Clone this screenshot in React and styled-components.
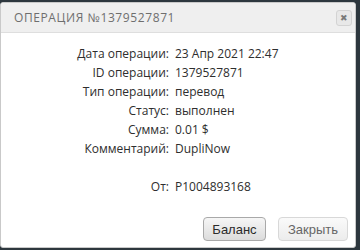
import React from "react";
import styled, { createGlobalStyle } from "styled-components";

const GlobalStyle = createGlobalStyle`
  body {
    margin: 0;
    background: #2d373e;
    font-family: "Open Sans", "Liberation Sans", sans-serif;
  }
`;

const Dialog = styled.div`
  width: 356px;
  height: 246px;
  margin-top: 2px;
  background: #fff;
  border: 1px solid #c9c9c9;
  border-radius: 3px;
  display: flex;
  flex-direction: column;
  box-sizing: border-box;
  overflow: hidden;
`;

const Header = styled.div`
  height: 29px;
  flex: 0 0 29px;
  background: #efefef;
  border-bottom: 1px solid #dedede;
  display: flex;
  align-items: center;
  justify-content: space-between;
  padding: 0 3px 0 13px;
`;

const Title = styled.span`
  font-size: 12px;
  letter-spacing: 0.6px;
  color: #6e6e6e;
  text-transform: uppercase;
`;

const CloseBtn = styled.button`
  width: 16px;
  height: 16px;
  padding: 0;
  border: 1px solid #d3d3d3;
  border-radius: 3px;
  background: #e8e8e8;
  color: #7a7a7a;
  font-size: 9px;
  line-height: 14px;
  display: flex;
  align-items: center;
  justify-content: center;
  cursor: pointer;
`;

const Details = styled.div`
  flex: 1;
  display: grid;
  grid-template-columns: 168px 1fr;
  grid-template-rows: repeat(8, 19px);
  column-gap: 6px;
  align-items: center;
  align-content: start;
  padding-top: 11px;
  font-size: 12px;
  line-height: 19px;
  color: #2e2e2e;
`;

const Label = styled.span`
  text-align: right;
  grid-row: ${(p) => p.$row};
`;

const Value = styled.span`
  grid-row: ${(p) => p.$row};
`;

const Footer = styled.div`
  display: flex;
  justify-content: flex-end;
  gap: 12px;
  padding: 0 7px 6px 0;
`;

const Button = styled.button`
  height: 24px;
  width: ${(p) => (p.$primary ? "63px" : "70px")};
  padding: 0;
  border-radius: 4px;
  font-family: "Liberation Sans", Arial, sans-serif;
  font-size: 13px;
  cursor: pointer;
  border: 1px solid ${(p) => (p.$primary ? "#a9a9a9" : "#d8d8d8")};
  color: ${(p) => (p.$primary ? "#2b2b2b" : "#666")};
  background: ${(p) =>
    p.$primary
      ? "linear-gradient(#f6f6f6, #dcdcdc)"
      : "linear-gradient(#fafafa, #ececec)"};
`;

const rows = [
  ["Дата операции:", "23 Апр 2021 22:47", 1],
  ["ID операции:", "1379527871", 2],
  ["Тип операции:", "перевод", 3],
  ["Статус:", "выполнен", 4],
  ["Сумма:", "0.01 $", 5],
  ["Комментарий:", "DupliNow", 6],
  ["От:", "P1004893168", 8],
];

const App = () => {
  return (
    <>
      <GlobalStyle />
      <Dialog>
        <Header>
          <Title>Операция №1379527871</Title>
          <CloseBtn>✖</CloseBtn>
        </Header>
        <Details>
          {rows.map(([label, value, row]) => (
            <React.Fragment key={label}>
              <Label $row={row}>{label}</Label>
              <Value $row={row}>{value}</Value>
            </React.Fragment>
          ))}
        </Details>
        <Footer>
          <Button $primary>Баланс</Button>
          <Button>Закрыть</Button>
        </Footer>
      </Dialog>
    </>
  );
};

export default App;
